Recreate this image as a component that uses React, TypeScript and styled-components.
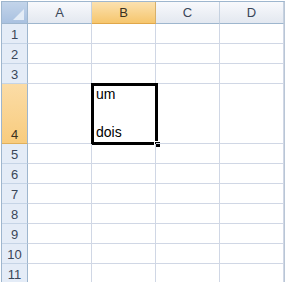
import styled, { createGlobalStyle, css } from 'styled-components';

const GlobalStyle = createGlobalStyle`
  html, body {
    margin: 0;
    padding: 0;
    background: #ffffff;
  }
  body {
    font-family: "Liberation Sans", Arial, sans-serif;
  }
`;

const columns = ['A', 'B', 'C', 'D'];
const rows = [1, 2, 3, 4, 5, 6, 7, 8, 9, 10, 11];
const selectedCol = 'B';
const selectedRow = 4;

const Frame = styled.div`
  padding: 1px;
  width: 287px;
  height: 282px;
  box-sizing: border-box;
  overflow: hidden;
`;

const Sheet = styled.div`
  display: grid;
  grid-template-columns: 26px repeat(4, 64px);
  grid-template-rows: 22px 20px 20px 20px 60px repeat(7, 20px);
  border-left: 1px solid #9eb6ce;
  border-top: 1px solid #9eb6ce;
  border-right: 1px solid #b9c6d6;
  width: max-content;
`;

const Corner = styled.div`
  background: linear-gradient(#c3d4ea, #a9c1e0);
  border-right: 1px solid #9eb6ce;
  border-bottom: 1px solid #9eb6ce;
  display: flex;
  align-items: flex-end;
  justify-content: flex-end;
  padding: 0 3px 3px 0;
`;

const ColHeader = styled.div<{ $active?: boolean }>`
  display: flex;
  align-items: center;
  justify-content: center;
  font-size: 13px;
  color: #3a4658;
  border-right: 1px solid #c5d1e0;
  border-bottom: 1px solid #9eb6ce;
  background: linear-gradient(#f8f9fc, #e3e8f0);
  ${(p) =>
    p.$active &&
    css`
      background: linear-gradient(#fbe1b0, #f6c66d);
      border-right-color: #d7b06a;
      border-bottom-color: #e0a74a;
      color: #3a3020;
    `}
`;

const RowHeader = styled.div<{ $active?: boolean }>`
  display: flex;
  align-items: flex-end;
  justify-content: center;
  padding-bottom: 1px;
  font-size: 13px;
  color: #3a4658;
  background: #e4ecf7;
  border-right: 1px solid #9eb6ce;
  border-bottom: 1px solid #c5d4e6;
  ${(p) =>
    p.$active &&
    css`
      background: linear-gradient(#fbdca6, #f8cc7e);
      border-bottom-color: #e0b05c;
      color: #3a3020;
    `}
`;

const Cell = styled.div`
  position: relative;
  border-right: 1px solid #d0d7e5;
  border-bottom: 1px solid #d0d7e5;
  font-size: 14px;
  color: #000;
  display: flex;
  flex-direction: column;
  justify-content: flex-end;
  padding: 0 3px 1px 4px;
  line-height: 19px;
  white-space: pre;
`;

const Selection = styled.div`
  position: absolute;
  left: -1px;
  top: -1px;
  right: -3px;
  bottom: -2px;
  border: 3px solid #000;
  pointer-events: none;
`;

const Handle = styled.div`
  position: absolute;
  right: -5px;
  bottom: -5px;
  width: 5px;
  height: 5px;
  background: #000;
  border: 1px solid #fff;
  border-right: none;
  border-bottom: none;
`;

const cellText: Record<string, string> = {
  B4: 'um\n\ndois',
};

export default function App() {
  return (
    <>
      <GlobalStyle />
      <Frame>
        <Sheet>
          <Corner>
            <svg width="11" height="11" viewBox="0 0 11 11">
              <polygon points="11,0 11,11 0,11" fill="#e4ecf6" />
            </svg>
          </Corner>
          {columns.map((c) => (
            <ColHeader key={c} $active={c === selectedCol}>
              {c}
            </ColHeader>
          ))}
          {rows.map((r) => (
            <Row key={r} row={r} />
          ))}
        </Sheet>
      </Frame>
    </>
  );
}

function Row({ row }: { row: number }) {
  return (
    <>
      <RowHeader $active={row === selectedRow}>{row}</RowHeader>
      {columns.map((c) => {
        const id = `${c}${row}`;
        const selected = c === selectedCol && row === selectedRow;
        return (
          <Cell key={id}>
            {cellText[id] ?? ''}
            {selected && (
              <Selection>
                <Handle />
              </Selection>
            )}
          </Cell>
        );
      })}
    </>
  );
}
